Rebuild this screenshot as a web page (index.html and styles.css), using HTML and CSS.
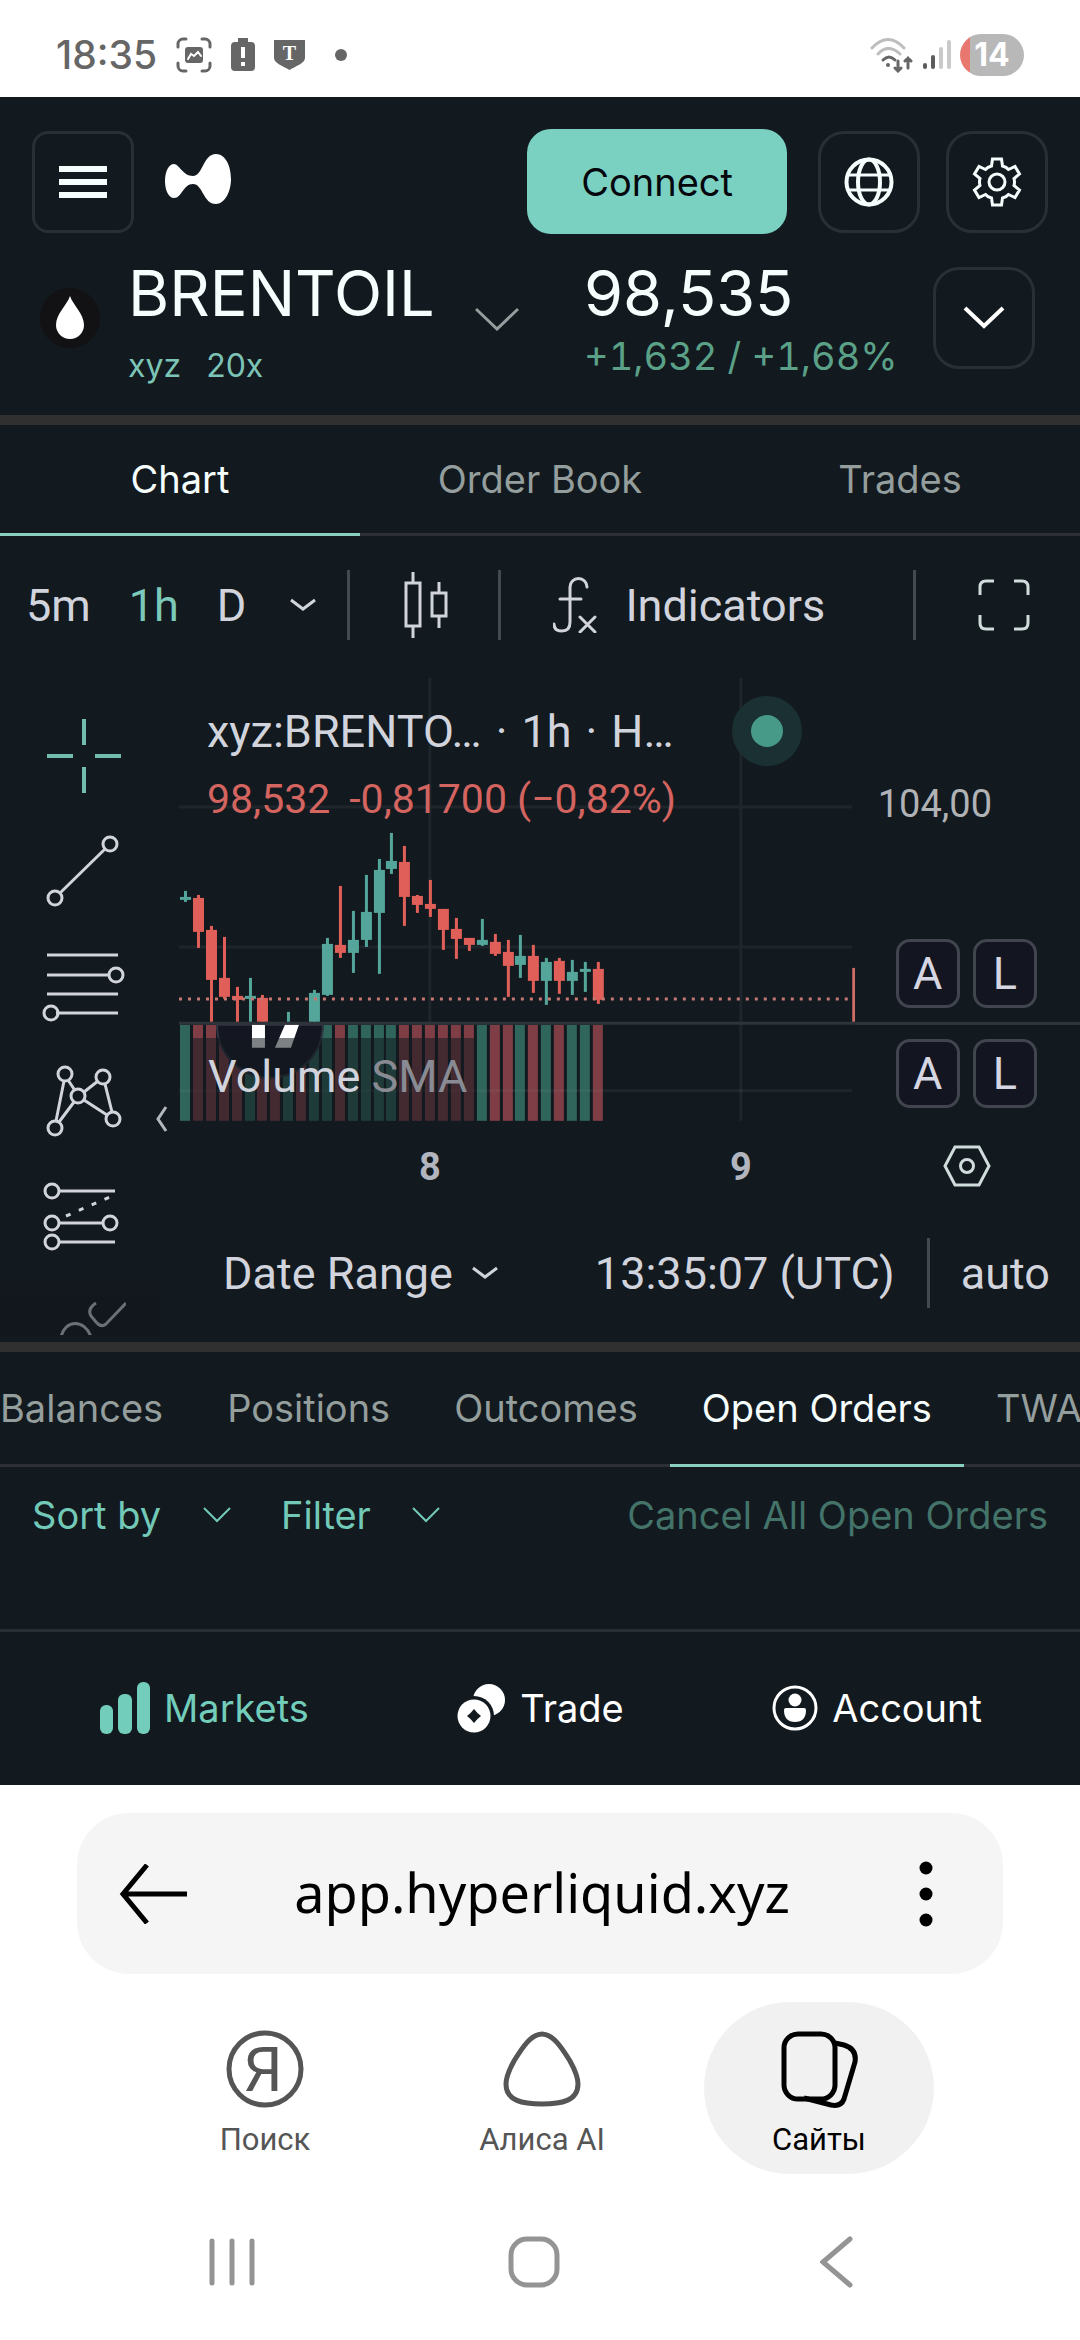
FILE: index.html
```html
<!DOCTYPE html>
<html lang="en">
<head>
  <meta charset="UTF-8" />
  <meta name="viewport" content="width=device-width, initial-scale=1.0" />
  <title>98,535 | BRENTOIL | Hyperliquid</title>
  <link rel="stylesheet" href="styles.css">
</head>
<body>
  <div class="status-bar">
    <span class="clock">18:35</span>
    <svg width="36" height="36" viewBox="0 0 36 36" fill="none" stroke="#666" stroke-width="3" stroke-linecap="round">
      <path d="M2 10V7a5 5 0 0 1 5-5h3M26 2h3a5 5 0 0 1 5 5v3M34 26v3a5 5 0 0 1-5 5h-3M10 34H7a5 5 0 0 1-5-5v-3" />
      <rect x="9" y="10" width="18" height="16" rx="3" fill="#666" stroke="none" />
      <path d="M12 22l3-5 3 2 4-4 3 4" stroke="#fff" stroke-width="2" />
    </svg>
    <svg width="24" height="34" viewBox="0 0 24 34">
      <path fill="#666" d="M7 0h10v4h3a4 4 0 0 1 4 4v21a4 4 0 0 1-4 4H4a4 4 0 0 1-4-4V8a4 4 0 0 1 4-4h3z" />
      <path fill="#fff" d="M10 9h4v11h-4zM10 24h4v4h-4z" />
    </svg>
    <svg width="31" height="31" viewBox="0 0 31 31">
      <path fill="#666" d="M0 1h31v18c0 5-9 8-15.500 12C9 27 0 24 0 19z" />
      <text class="shield-letter" x="15.500" y="21" text-anchor="middle">T</text>
    </svg>
    <span class="more-dot"></span>
    <span class="status-right">
      <svg width="44" height="36" viewBox="0 0 44 36" fill="none" stroke-width="3" stroke-linecap="round">
        <path d="M2 11q16-17 32 0M8 17q10-11 22 0" stroke="#bdbdbd" />
        <path d="M13 23q6-6 12 0" stroke="#666" />
        <circle cx="18" cy="28" r="2" fill="#666" />
        <path d="M28 24v10M25 31l3 3 3-3M38 31V21M35 24l3-3 3 3" stroke="#666" />
      </svg>
      <svg width="28" height="30" viewBox="0 0 28 30" stroke-width="4" stroke-linecap="round">
        <path d="M2 25v2M10 17v10" stroke="#5c5c5c" />
        <path d="M18 9v18M26 2v25" stroke="#c9c9c9" />
      </svg>
      <span class="battery">14</span>
    </span>
  </div>

  <main class="app">
    <header class="top-bar">
      <button class="icon-btn menu-btn" aria-label="Menu">
        <svg width="48" height="34" viewBox="0 0 48 34" fill="#f6fefd"><path d="M0 1h48v6H0zM0 14h48v6H0zM0 27h48v6H0z" /></svg>
      </button>
      <a class="logo" href="#" aria-label="Hyperliquid">
        <svg width="66" height="50" viewBox="0 0 66 50" fill="#fff">
          <path d="M9 10C14 10 18 22 28 22C38 22 38 0 51 0C60 0 66 11 66 25C66 39 59 50 51 50C38 50 38 30 28 30C18 30 17 44 9 44C4 44 0 37 0 27C0 17 4 10 9 10Z" />
        </svg>
      </a>
      <button class="connect">Connect</button>
      <div class="top-actions">
        <button class="icon-btn" aria-label="Language">
          <svg width="50" height="50" viewBox="0 0 50 50" fill="none" stroke="#f6fefd" stroke-width="4">
            <circle cx="25" cy="25" r="22.500" />
            <ellipse cx="25" cy="25" rx="11" ry="22.500" />
            <path d="M4 18h42M4 33h42" stroke-width="3" />
          </svg>
        </button>
        <button class="icon-btn" aria-label="Settings">
          <svg width="50" height="50" viewBox="0 0 50 50" fill="none" stroke="#f6fefd" stroke-width="3">
            <circle cx="25" cy="25" r="8" />
            <path d="M20.500 2h9l1 7q4 1 6 3.500l6.500-3 4.500 7.500-5.500 4.500q1 4 0 7l5.500 4.500-4.500 7.500-6.500-3q-2 2.500-6 3.500l-1 7h-9l-1-7q-4-1-6-3.500l-6.500 3-4.500-7.500 5.500-4.500q-1-4 0-7l-5.500-4.500 4.500-7.500 6.500 3q2-2.500 6-3.500z" />
          </svg>
        </button>
      </div>
    </header>

    <section class="ticker">
      <span class="coin">
        <svg width="28" height="44" viewBox="0 0 28 44"><path fill="#fff" d="M14 0C17 9 28 18 28 29a14 14 0 0 1-28 0C0 18 11 9 14 0z" /></svg>
      </span>
      <div class="market">
        <div>
          <h1 class="big">BRENTOIL</h1>
          <p class="tags"><span>xyz</span><span>20x</span></p>
        </div>
        <button class="plain market-toggle" aria-label="Select market">
          <svg width="44" height="24" viewBox="0 0 44 24" fill="none" stroke="#949e9c" stroke-width="3"><path d="M1 2l21 20L43 2" /></svg>
        </button>
      </div>
      <div>
        <p class="big">98,535</p>
        <p class="change">+1,632 / +1,68%</p>
      </div>
      <button class="icon-btn details-btn" aria-label="Show details">
        <svg width="42" height="24" viewBox="0 0 42 24" fill="none" stroke="#fff" stroke-width="4"><path d="M2 2l19 18L40 2" /></svg>
      </button>
    </section>

    <nav class="tabs view-tabs">
      <button class="tab active">Chart</button>
      <button class="tab">Order Book</button>
      <button class="tab">Trades</button>
    </nav>

    <section class="chart">
      <div class="toolbar">
        <div class="intervals">
          <button class="plain">5m</button>
          <button class="plain selected">1h</button>
          <button class="plain">D</button>
          <button class="plain interval-more" aria-label="More intervals">
            <svg width="26" height="14" viewBox="0 0 26 14" fill="none" stroke="#d1d4dc" stroke-width="3"><path d="M1 2l12 9L25 2" /></svg>
          </button>
        </div>
        <button class="plain tool-cell candles" aria-label="Candles">
          <svg width="44" height="66" viewBox="0 0 44 66" fill="none" stroke="#d1d4dc" stroke-width="3">
            <rect x="2" y="11" width="14" height="43" />
            <path d="M9 0v11M9 54v12M35 10v10M35 45v11" />
            <rect x="28" y="21" width="14" height="23" />
          </svg>
        </button>
        <button class="plain tool-cell indicators">
          <svg width="44" height="56" viewBox="0 0 44 56" fill="none" stroke="#d1d4dc" stroke-width="3" stroke-linecap="round">
            <path d="M34 10a8 8 0 0 0-17 0v35q0 9-8 9t-8-7M7 22h21M27 40l15 15M42 40L27 55" />
          </svg>
          Indicators
        </button>
        <button class="plain fullscreen" aria-label="Fullscreen">
          <svg width="52" height="52" viewBox="0 0 52 52" fill="none" stroke="#d1dcdc" stroke-width="3">
            <path d="M2 16V8q0-6 6-6h8M36 2h8q6 0 6 6v8M50 36v8q0 6-6 6h-8M16 50H8q-6 0-6-6v-8" />
          </svg>
        </button>
      </div>

      <div class="chart-body">
        <div class="drawing-tools">
          <button class="plain" aria-label="Cross">
            <svg width="84" height="76" viewBox="0 0 84 76" fill="none" stroke="#72bdae" stroke-width="4"><path d="M42 1v26M42 49v26M5 38h26M53 38h26" /></svg>
          </button>
          <button class="plain" aria-label="Trend line">
            <svg width="84" height="76" viewBox="0 0 84 76" fill="none" stroke="#d1d4dc" stroke-width="3"><circle cx="13" cy="65" r="7" /><circle cx="68" cy="11" r="7" /><path d="M18 60l45-44" /></svg>
          </button>
          <button class="plain" aria-label="Fib retracement">
            <svg width="84" height="76" viewBox="0 0 84 76" fill="none" stroke="#d1d4dc" stroke-width="3"><path d="M5 7h71M5 27h62M5 46h71M14 65h62" /><circle cx="74" cy="27" r="7" /><circle cx="9" cy="65" r="7" /></svg>
          </button>
          <button class="plain" aria-label="XABCD pattern">
            <svg width="84" height="76" viewBox="0 0 84 76" fill="none" stroke="#d1d4dc" stroke-width="3"><circle cx="23" cy="11" r="7" /><circle cx="61" cy="14" r="7" /><circle cx="36" cy="33" r="7" /><circle cx="13" cy="65" r="7" /><circle cx="71" cy="56" r="7" /><path d="M22 18l-8 40M26 17l6 9M42 29l14-11M63 21l7 28M42 37l23 15M32 39L17 59" /></svg>
          </button>
          <button class="plain" aria-label="Long position">
            <svg width="84" height="76" viewBox="0 0 84 76" fill="none" stroke="#d1d4dc" stroke-width="3"><circle cx="10" cy="13" r="7" /><circle cx="10" cy="45" r="7" /><circle cx="68" cy="45" r="7" /><circle cx="10" cy="64" r="7" /><path d="M17 13h56M17 45h44M17 64h56" /><path d="M24 38l46-20" stroke-dasharray="5 9" /></svg>
          </button>
          <button class="plain" aria-label="Brush">
            <svg width="84" height="76" viewBox="0 0 84 76" fill="none" stroke="#6b6f76" stroke-width="3"><path d="M19 44c4-18 24-18 30 0M54 10c-6 4-8 8-5 13l5 6q5 6 10 2L84 10" /></svg>
          </button>
        </div>

        <div class="chart-area">
          <div class="panes">
            <svg class="plot" viewBox="0 0 676 532" preserveAspectRatio="xMinYMin meet">
              <g class="grid-lines">
                <path d="M251 0V443M562 0V443M0 129H673M0 269H673" />
              </g>
              <g id="volume"></g>
              <path class="grid-lines" d="M0 413H673" />
              <g id="candles"></g>
              <path class="price-line" d="M0 321H672" />
              <path class="price-tag" d="M675 290V344" />
              <g id="watermark">
                <path fill="#141722" stroke="#30343e" stroke-width="2" d="M38 347A53 53 0 1 0 144 347z" />
                <path fill="#fff" d="M73 347h13v23H73zM106 347h14l-8 23H96z" />
              </g>
              <path class="pane-line" d="M0 345.500H676" />
              <text class="time-label" x="251" y="502" text-anchor="middle">8</text>
              <text class="time-label" x="562" y="502" text-anchor="middle">9</text>
            </svg>
            <div class="scales">
              <div class="scale price-scale">
                <span class="price-label">104,00</span>
                <div class="scale-buttons"><button>A</button><button>L</button></div>
              </div>
              <div class="scale volume-scale">
                <div class="scale-buttons"><button>A</button><button>L</button></div>
              </div>
              <button class="plain axis-settings" aria-label="Chart settings">
                <svg width="48" height="42" viewBox="0 0 48 42" fill="none" stroke="#d1dcdc" stroke-width="3"><path d="M12 2h24l10 19-10 19H12L2 21z" /><circle cx="24" cy="21" r="6.500" /></svg>
              </button>
            </div>
          </div>

          <div class="legend">
            <div class="legend-title">
              <span>xyz:BRENTO…</span><span>·</span><span>1h</span><span>·</span><span>H…</span>
              <span class="live-dot"></span>
            </div>
            <div class="legend-values"><span>98,532</span><span>-0,81700 (−0,82%)</span></div>
          </div>
          <div class="volume-legend">Volume <span>SMA</span></div>
          <button class="plain collapse" aria-label="Hide drawing tools">
            <svg width="12" height="26" viewBox="0 0 12 26" fill="none" stroke="#b4b8bd" stroke-width="3"><path d="M10 1L2 13l8 12" /></svg>
          </button>

          <div class="chart-footer">
            <button class="plain date-range">Date Range
              <svg width="26" height="14" viewBox="0 0 26 14" fill="none" stroke="#d1d4dc" stroke-width="3"><path d="M1 2l12 9L25 2" /></svg>
            </button>
            <button class="plain utc">13:35:07 (UTC)</button>
            <button class="plain auto">auto</button>
          </div>
        </div>
      </div>
    </section>

    <nav class="tabs account-tabs">
      <button class="tab">Balances</button>
      <button class="tab">Positions</button>
      <button class="tab">Outcomes</button>
      <button class="tab active">Open Orders</button>
      <button class="tab">TWAP</button>
    </nav>

    <section class="orders">
      <label class="dropdown">
        <select aria-label="Sort by"><option>Sort by</option></select>
        <svg width="28" height="16" viewBox="0 0 28 16" fill="none" stroke="#72c9b8" stroke-width="2"><path d="M1 1l13 13L27 1" /></svg>
      </label>
      <label class="dropdown">
        <select aria-label="Filter"><option>Filter</option></select>
        <svg width="28" height="16" viewBox="0 0 28 16" fill="none" stroke="#72c9b8" stroke-width="2"><path d="M1 1l13 13L27 1" /></svg>
      </label>
      <button class="plain cancel-all" disabled>Cancel All Open Orders</button>
    </section>

    <nav class="bottom-nav">
      <a href="#" class="current">
        <svg width="50" height="52" viewBox="0 0 50 52" fill="#72cdbb"><rect y="23" width="13" height="29" rx="6" /><rect x="18" y="12" width="14" height="40" rx="6" /><rect x="37" width="13" height="52" rx="6" /></svg>
        Markets
      </a>
      <a href="#">
        <svg width="49" height="50" viewBox="0 0 49 50">
          <circle cx="32" cy="17" r="16" fill="#fff" />
          <circle cx="17" cy="33" r="20" fill="#12191f" />
          <circle cx="17" cy="33" r="16.500" fill="#fff" />
          <path d="M17 26q3 4 7 7-4 3-7 7-3-4-7-7 4-3 7-7z" fill="#12191f" />
        </svg>
        Trade
      </a>
      <a href="#">
        <svg width="46" height="46" viewBox="0 0 46 46" fill="#fff"><circle cx="23" cy="23" r="21" fill="none" stroke="#fff" stroke-width="3" /><circle cx="23" cy="15" r="6.500" /><path d="M12 25q0-2 2-2h18q2 0 2 2 0 12-11 12T12 25z" /></svg>
        Account
      </a>
    </nav>
  </main>

  <footer class="browser">
    <div class="omnibox">
      <button class="plain" aria-label="Back">
        <svg width="68" height="60" viewBox="0 0 68 60" fill="none" stroke="#000" stroke-width="5"><path d="M68 30H4M28 1L4 30l24 29" /></svg>
      </button>
      <input type="text" value="app.hyperliquid.xyz" aria-label="Address">
      <button class="plain" aria-label="Browser menu">
        <svg width="14" height="66" viewBox="0 0 14 66"><circle cx="7" cy="7" r="6.500" /><circle cx="7" cy="33" r="6.500" /><circle cx="7" cy="59" r="6.500" /></svg>
      </button>
    </div>
    <nav class="browser-tabs" lang="ru">
      <a href="#">
        <svg width="78" height="78" viewBox="0 0 78 78"><circle cx="39" cy="39" r="36" fill="none" stroke="#555" stroke-width="5" /><text class="ya" x="37" y="61" text-anchor="middle">Я</text></svg>
        Поиск
      </a>
      <a href="#">
        <svg width="78" height="78" viewBox="0 0 78 78" fill="none" stroke="#555" stroke-width="5"><path d="M39 4C28 4 19 18 11 31C6 40 3 47 3 54C3 71 20 74 39 74C58 74 75 71 75 54C75 47 72 40 67 31C59 18 50 4 39 4Z" /></svg>
        Алиса AI
      </a>
      <a href="#" class="current">
        <svg width="78" height="78" viewBox="0 0 78 78" fill="none" stroke="#000" stroke-width="5"><rect x="4" y="4" width="51" height="65" rx="14" /><path d="M55 13l9 2q13 4 11 17l-11 37q-3 8-13 6l-27-7" /></svg>
        Сайты
      </a>
    </nav>
    <nav class="system-nav">
      <button class="plain" aria-label="Recent apps"><svg width="46" height="50" viewBox="0 0 46 50" stroke="#949494" stroke-width="5" stroke-linecap="round"><path d="M3 4v42M23 4v42M43 4v42" /></svg></button>
      <button class="plain" aria-label="Home"><svg width="52" height="52" viewBox="0 0 52 52" fill="none" stroke="#949494" stroke-width="5"><rect x="3" y="3" width="46" height="46" rx="16" /></svg></button>
      <button class="plain" aria-label="Back"><svg width="34" height="52" viewBox="0 0 34 52" fill="none" stroke="#949494" stroke-width="5" stroke-linecap="round"><path d="M30 3L3 26l27 23" /></svg></button>
    </nav>
  </footer>

  <script>
    // [up, high, body top, body bottom, low], null bodies fall outside of the visible pane
    const candles = [
      [1, 213, 219, 222, 224], [0, 217, 220, 254, 270], [0, 248, 252, 302, 344],
      [0, 259, 300, 319, 321], [0, 309, 318, 322, 344], [1, 300, 318, 321, 344],
      [0, 317, 320, 344, 344], [0, null], [1, 334, 344, 344, 344], [0, null],
      [1, 312, 315, 344, 344], [1, 260, 266, 317, 318], [0, 208, 267, 275, 280],
      [1, 233, 262, 275, 295], [1, 197, 234, 262, 269], [1, 181, 192, 235, 296],
      [1, 155, 183, 191, 196], [0, 168, 184, 219, 248], [0, 217, 218, 227, 235],
      [0, 202, 226, 231, 239], [0, 231, 231, 252, 272], [0, 240, 251, 261, 281],
      [0, 260, 260, 267, 273], [1, 241, 262, 267, 268], [0, 256, 264, 276, 278],
      [0, 262, 274, 288, 319], [1, 257, 278, 287, 300], [0, 267, 278, 303, 315],
      [1, 280, 284, 303, 327], [0, 280, 283, 303, 316], [1, 282, 294, 303, 317],
      [1, 284, 291, 294, 314], [0, 284, 291, 322, 326]
    ];
    const step = 12.9;

    function addRect(parent, x, y, width, height, cls) {
      const rect = document.createElementNS('http://www.w3.org/2000/svg', 'rect');
      rect.setAttribute('x', x);
      rect.setAttribute('y', y);
      rect.setAttribute('width', width);
      rect.setAttribute('height', height);
      rect.setAttribute('class', cls);
      parent.appendChild(rect);
    }

    const candleGroup = document.getElementById('candles');
    const volumeGroup = document.getElementById('volume');

    candles.forEach(([up, high, top, bottom, low], i) => {
      const x = Math.round(1 + i * step);
      addRect(volumeGroup, x, 347, 10, 96, up ? 'vol-up' : 'vol-down');
      if (high === null) return;
      addRect(candleGroup, x + 4, high, 3, low - high, up ? 'up' : 'down');
      addRect(candleGroup, x, top, 11, bottom - top, up ? 'up' : 'down');
    });
  </script>
</body>
</html>
```

FILE: styles.css
```css
* {
  margin: 0;
  padding: 0;
  box-sizing: border-box;
}

body {
  font-family: Inter, sans-serif;
  background-color: #fff;
  color: #f6fefd;
}

button, input, select {
  font: inherit;
  color: inherit;
  border: none;
  background: none;
}

svg {
  display: block;
  flex-shrink: 0;
}

.plain {
  display: flex;
  align-items: center;
  justify-content: center;
}

/* phone status bar */
.status-bar {
  display: flex;
  align-items: center;
  gap: 19px;
  height: 97px;
  padding: 12px 56px 0;
  color: #666;
}

.clock {
  font-size: 39px;
  font-weight: 500;
}

.shield-letter {
  font: bold 20px "Liberation Serif", serif;
  fill: #fff;
}

.more-dot {
  width: 12px;
  height: 12px;
  margin-left: 11px;
  border-radius: 50%;
  background-color: #666;
}

.status-right {
  display: flex;
  align-items: center;
  gap: 9px;
  margin-left: auto;
}

.battery {
  width: 64px;
  height: 42px;
  border-radius: 21px;
  background: linear-gradient(90deg, #e8786f 10px, #b8b8b8 10px);
  color: #fff;
  font-size: 32px;
  font-weight: 700;
  line-height: 42px;
  text-align: center;
}

/* app */
.app {
  background-color: #12191f;
}

.top-bar {
  display: flex;
  align-items: center;
  gap: 31px;
  padding: 32px 32px 0;
}

.logo {
  padding-bottom: 6px;
}

.icon-btn {
  display: flex;
  align-items: center;
  justify-content: center;
  width: 102px;
  height: 102px;
  border: 3px solid #273035;
  border-radius: 26px;
}

.menu-btn {
  border-radius: 16px;
}

.connect {
  height: 105px;
  margin-left: auto;
  padding: 0 54px;
  border-radius: 24px;
  background-color: #7ad0c1;
  color: #04060c;
  font-size: 38px;
}

.top-actions {
  display: flex;
  gap: 26px;
}

.ticker {
  display: grid;
  grid-template-columns: 60px 4fr 3fr 102px;
  align-items: start;
  gap: 28px;
  padding: 29px 45px 26px 40px;
}

.coin {
  display: flex;
  align-items: center;
  justify-content: center;
  height: 60px;
  margin-top: 25px;
  border-radius: 50%;
  background-color: #121214;
}

.market {
  display: flex;
  align-items: flex-start;
  justify-content: space-between;
  padding-right: 37px;
}

.big {
  font-size: 63px;
  font-weight: 400;
  line-height: 60px;
}

.tags {
  display: flex;
  gap: 25px;
  margin-top: 19px;
  color: #7cc4b6;
  font-size: 32px;
  line-height: 47px;
}

.market-toggle {
  height: 60px;
  margin-top: 26px;
}

.change {
  margin-top: 12px;
  color: #5ba188;
  font-size: 38px;
  font-variant-numeric: tabular-nums;
  line-height: 42px;
  white-space: nowrap;
}

.details-btn {
  margin-top: 4px;
}

/* tabs */
.tabs {
  display: flex;
  border-top: 10px solid #303030;
  box-shadow: inset 0 -3px #2c3034;
  font-size: 38px;
}

.tab {
  height: 111px;
  border-bottom: 3px solid transparent;
  color: #949e9c;
  white-space: nowrap;
}

.tab.active {
  border-color: #8ad0c2;
  color: #f6fefd;
}

.view-tabs .tab {
  flex: 1;
}

/* chart */
.chart {
  color: #d1d4dc;
  font-family: Roboto, sans-serif;
  font-size: 45px;
}

.toolbar {
  display: flex;
  align-items: center;
  height: 138px;
  padding-left: 26px;
}

.intervals {
  display: flex;
  gap: 38px;
}

.intervals .selected {
  color: #7cc9ba;
}

.interval-more {
  margin: 0 31px 0 6px;
}

.tool-cell {
  height: 70px;
  border-left: 3px solid #454a4e;
}

.candles {
  padding: 0 50px 0 54px;
}

.indicators {
  gap: 28px;
  padding-left: 52px;
}

.fullscreen {
  height: 70px;
  margin-left: auto;
  padding: 0 50px 0 62px;
  border-left: 3px solid #454a4e;
}

.chart-body {
  display: grid;
  grid-template-columns: 160px 1fr;
}

/* column is clipped to the height of the chart beside it */
.drawing-tools {
  height: 0;
  min-height: 100%;
  overflow: hidden;
  padding-top: 24px;
  border-bottom: 7px solid #12191f;
}

.drawing-tools button {
  width: 168px;
  height: 115px;
}

.drawing-tools button:last-child {
  background: linear-gradient(#12191f, #12161d 40px);
}

.chart-area {
  position: relative;
  padding-left: 19px;
}

.panes {
  display: grid;
  grid-template-columns: 3fr 1fr;
  padding-top: 4px;
}

.plot {
  width: 100%;
}

.grid-lines {
  fill: none;
  stroke: rgba(150, 160, 160, 0.1);
  stroke-width: 3;
}

.up {
  fill: #55a69a;
}

.down {
  fill: #e05f58;
}

.vol-up {
  fill: #2f655a;
}

.vol-down {
  fill: #7f3d45;
}

.price-line {
  stroke: #c77873;
  stroke-width: 3;
  stroke-dasharray: 3 6;
}

.price-tag {
  stroke: #cf6c66;
  stroke-width: 3;
}

.pane-line {
  stroke: #2e343a;
  stroke-width: 3;
}

.time-label {
  fill: #b2b5be;
  font-size: 38px;
  font-weight: 700;
}

.scale {
  display: flex;
  flex-direction: column;
  padding-left: 41px;
}

.price-scale {
  justify-content: space-between;
  height: 347px;
  padding-top: 102px;
  padding-bottom: 14px;
  border-bottom: 3px solid #2e343a;
}

.volume-scale {
  height: 96px;
  padding-top: 14px;
}

.price-label {
  margin-left: -18px;
  color: #b0b2b6;
  font-size: 38px;
  line-height: 48px;
}

.scale-buttons {
  display: flex;
  gap: 13px;
}

.scale-buttons button {
  width: 64px;
  height: 69px;
  border: 3px solid #41454e;
  border-radius: 14px;
  background-color: #131520;
  color: #d5d6e2;
}

.axis-settings {
  width: 100%;
  height: 89px;
}

.legend {
  position: absolute;
  top: 19px;
  left: 47px;
}

.legend-title {
  display: flex;
  align-items: center;
  gap: 14px;
  height: 76px;
}

.live-dot {
  width: 70px;
  height: 70px;
  margin-left: 44px;
  border: 19px solid #1b3033;
  border-radius: 50%;
  background-color: #479a87;
}

.legend-values {
  display: flex;
  gap: 19px;
  color: #d3645f;
  font-size: 41px;
  line-height: 60px;
}

.volume-legend {
  position: absolute;
  top: 364px;
  left: 31px;
  height: 83px;
  padding: 0 10px 0 17px;
  background-color: rgba(18, 25, 31, 0.55);
  line-height: 78px;
}

.volume-legend span {
  color: #888b93;
}

.collapse {
  position: absolute;
  top: 432px;
  left: -4px;
}

.chart-footer {
  display: flex;
  align-items: center;
  height: 132px;
  padding: 0 30px 6px 44px;
}

.date-range {
  gap: 19px;
}

.utc {
  margin-left: auto;
  padding-right: 32px;
}

.auto {
  height: 70px;
  padding-left: 31px;
  border-left: 3px solid #454a4e;
}

/* account panel */
.account-tabs {
  overflow: hidden;
}

.account-tabs .tab {
  height: 115px;
  padding: 0 32px;
}

.account-tabs .tab:first-child {
  padding-left: 0;
}

.orders {
  display: flex;
  align-items: center;
  height: 162px;
  padding: 0 32px 66px;
  color: #72c9b8;
  font-size: 38px;
}

.dropdown {
  display: flex;
  align-items: center;
  gap: 41px;
  margin-right: 50px;
}

.dropdown select {
  appearance: none;
}

.cancel-all {
  margin-left: auto;
  color: #437369;
}

.bottom-nav {
  display: flex;
  align-items: center;
  justify-content: space-between;
  height: 156px;
  padding: 0 98px 2px 100px;
  border-top: 3px solid #273035;
  font-size: 38px;
}

.bottom-nav a {
  display: flex;
  align-items: center;
  gap: 14px;
  color: #fff;
  text-decoration: none;
}

.bottom-nav .current {
  color: #72cdbb;
}

/* browser controls */
.browser {
  padding-top: 28px;
  color: #000;
}

.omnibox {
  display: flex;
  align-items: center;
  height: 161px;
  margin: 0 77px;
  padding: 0 70px 0 42px;
  border-radius: 52px;
  background-color: #f5f5f5;
}

.omnibox input {
  flex: 1;
  min-width: 0;
  padding: 0 22px 4px 0;
  font-family: "Noto Sans", sans-serif;
  font-size: 54px;
  text-align: center;
}

.browser-tabs {
  display: flex;
  justify-content: space-between;
  padding: 28px 146px 0 150px;
  font-family: Roboto, sans-serif;
  font-size: 31px;
}

.browser-tabs a {
  display: flex;
  flex-direction: column;
  align-items: center;
  gap: 13px;
  width: 230px;
  height: 172px;
  padding-top: 28px;
  border-radius: 86px;
  color: #555;
  text-decoration: none;
}

.browser-tabs .current {
  background-color: #f1f1f1;
  color: #000;
}

.ya {
  fill: #555;
  font-size: 62px;
  font-weight: 400;
}

.system-nav {
  display: grid;
  grid-template-columns: repeat(3, 1fr);
  height: 166px;
  padding: 10px 92px 0 81px;
}
```
